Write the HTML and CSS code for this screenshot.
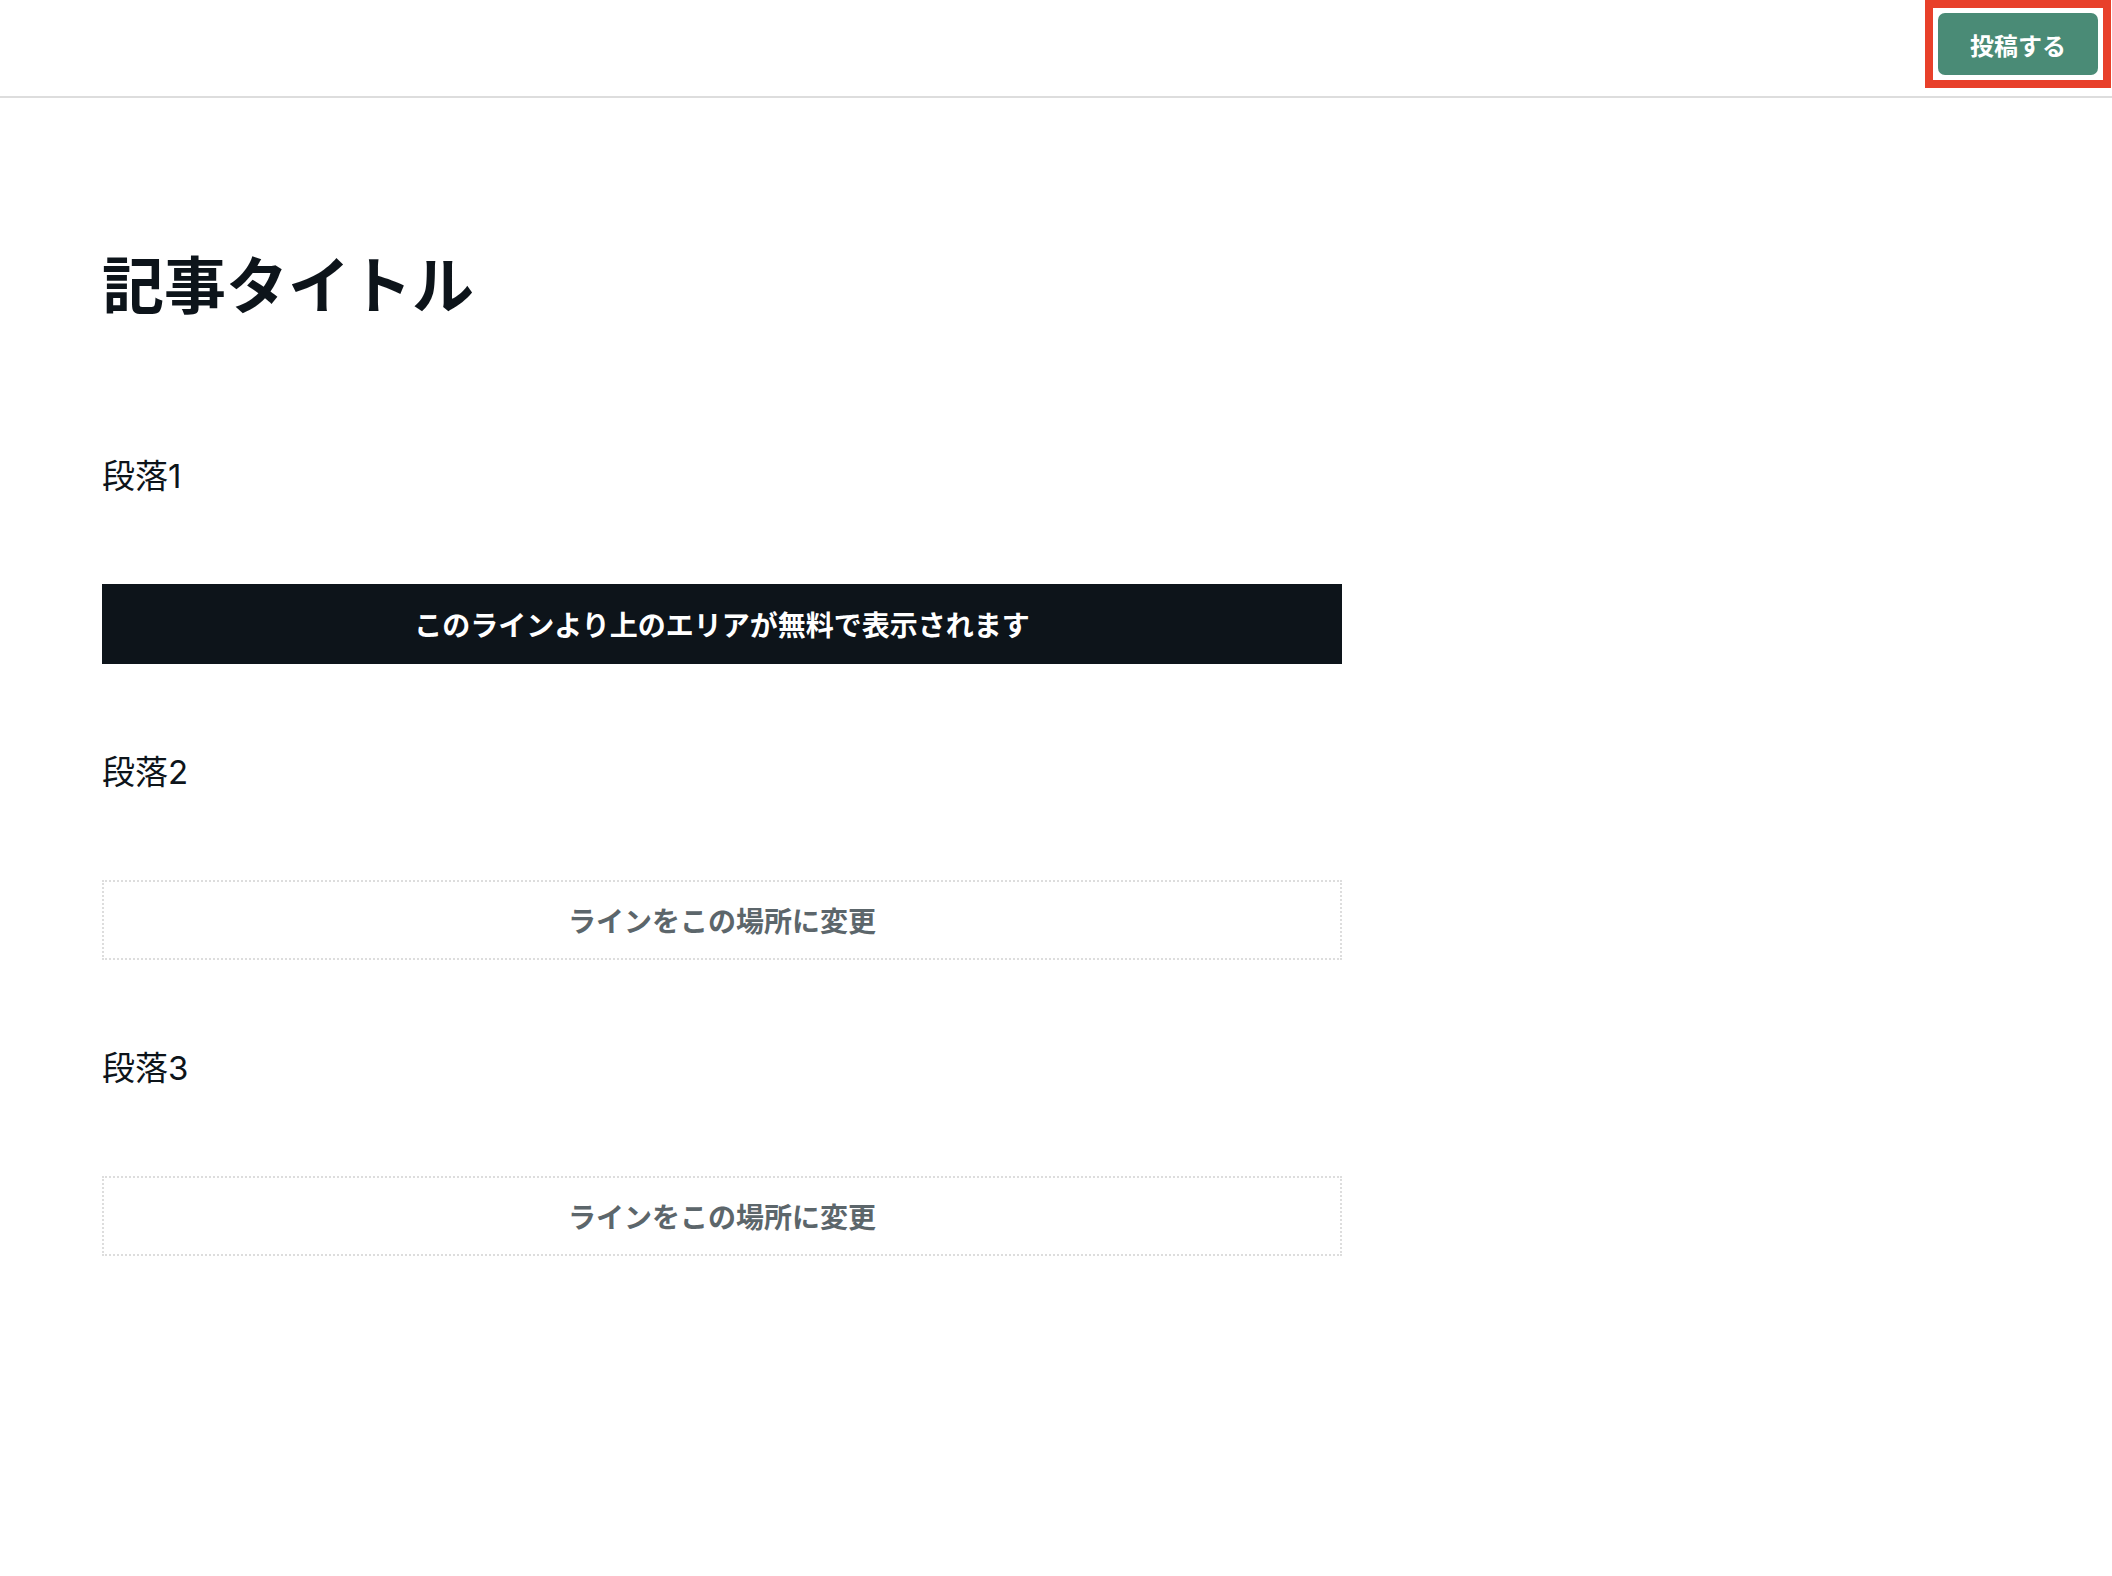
FILE: index.html
```html
<!DOCTYPE html>
<html lang="ja">
<head>
    <meta charset="UTF-8">
    <meta name="viewport" content="width=device-width, initial-scale=1.0">
    <title>記事タイトル</title>
    <link rel="stylesheet" href="styles.css">
</head>
<body>
    <header class="topbar">
        <span class="highlight">
            <button class="post-button">投稿する</button>
        </span>
    </header>
    <main class="editor">
        <h1 class="title">記事タイトル</h1>
        <div class="blocks">
            <p class="para">段落1</p>
            <div class="paywall-line">このラインより上のエリアが無料で表示されます</div>
            <p class="para">段落2</p>
            <div class="line-slot">ラインをこの場所に変更</div>
            <p class="para">段落3</p>
            <div class="line-slot">ラインをこの場所に変更</div>
        </div>
    </main>
</body>
</html>
```

FILE: styles.css
```css
body {
    margin: 0;
    background: #fff;
    color: #0d141a;
    font-family: Inter, "Noto Sans CJK JP", sans-serif;
}
.topbar {
    height: 96px;
    border-bottom: 2px solid #dddddd;
    display: flex;
    justify-content: flex-end;
    align-items: flex-start;
    padding-right: 1px;
}
.highlight {
    display: inline-flex;
    border: 8px solid #e8402a;
    padding: 5px;
}
.post-button {
    width: 160px;
    height: 62px;
    background-color: #4a8b76;
    color: #fff;
    border: none;
    border-radius: 7px;
    font-family: "Noto Sans CJK JP", sans-serif;
    font-size: 24px;
    font-weight: bold;
    cursor: pointer;
}
.editor {
    padding-left: 102px;
    width: 1240px;
}
.title {
    margin: 153px 0 0;
    font-family: "Noto Sans CJK JP", sans-serif;
    font-size: 62px;
    line-height: 62px;
    font-weight: bold;
}
.blocks {
    margin-top: 147px;
    display: flex;
    flex-direction: column;
    gap: 92px;
}
.para {
    margin: 0;
    font-size: 33px;
    line-height: 32px;
}
.paywall-line, .line-slot {
    height: 80px;
    box-sizing: border-box;
    display: flex;
    align-items: center;
    justify-content: center;
    font-family: "Noto Sans CJK JP", sans-serif;
    font-size: 28px;
    font-weight: bold;
}
.paywall-line {
    background-color: #0d141a;
    color: #fff;
}
.line-slot {
    border: 2px dotted #dddddd;
    color: #5c666b;
}
```
